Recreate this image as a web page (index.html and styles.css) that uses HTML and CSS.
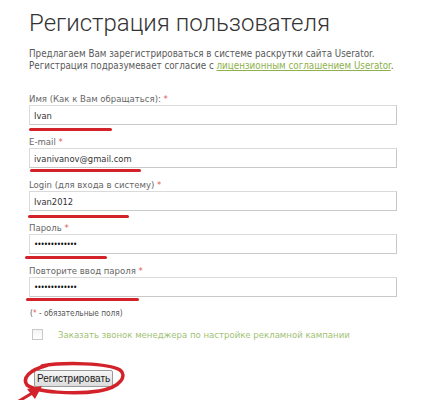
FILE: index.html
```html
<!DOCTYPE html>
<html lang="ru">
<head>
<meta charset="utf-8">
<title>Регистрация пользователя</title>
<link rel="stylesheet" href="styles.css">
</head>
<body>
<div class="page">
  <h1 class="title">Регистрация пользователя</h1>
  <p class="intro">Предлагаем Вам зарегистрироваться в системе раскрутки сайта Userator.<br>Регистрация подразумевает согласие с <a href="#" class="link">лицензионным соглашением Userator</a>.</p>

  <form class="form">
    <div class="field">
      <label class="label">Имя (Как к Вам обращаться): <span class="req">*</span></label>
      <input class="input" type="text" value="Ivan">
      <span class="mark mark-1"></span>
    </div>
    <div class="field">
      <label class="label">E-mail <span class="req">*</span></label>
      <input class="input" type="text" value="ivanivanov@gmail.com">
      <span class="mark mark-2"></span>
    </div>
    <div class="field">
      <label class="label">Login (для входа в систему) <span class="req">*</span></label>
      <input class="input" type="text" value="Ivan2012">
      <span class="mark mark-3"></span>
    </div>
    <div class="field">
      <label class="label">Пароль <span class="req">*</span></label>
      <input class="input pass" type="password" value="ivanivanov123">
      <span class="mark mark-4"></span>
    </div>
    <div class="field">
      <label class="label">Повторите ввод пароля <span class="req">*</span></label>
      <input class="input pass" type="password" value="ivanivanov123">
      <span class="mark mark-5"></span>
    </div>

    <p class="note">(<span class="req">*</span> - обязательные поля)</p>

    <div class="check-row">
      <span class="checkbox"></span>
      <span class="check-text">Заказать звонок менеджера по настройке рекламной кампании</span>
    </div>

    <div class="submit-row">
      <button type="button" class="btn">Регистрировать</button>
      <svg class="circle" width="104" height="36" viewBox="0 0 104 36">
        <path d="M20 5 C 42 1, 86 2, 98 9 C 105 14, 100 26, 77 30 C 52 34, 14 31, 5 24 C 0 17, 7 9, 26 4" fill="none" stroke="#d3222a" stroke-width="3.5" stroke-linecap="round"/>
      </svg>
      <svg class="arrow" width="44" height="30" viewBox="0 0 44 30">
        <line x1="2" y1="28" x2="32" y2="10" stroke="#d3222a" stroke-width="3" stroke-linecap="round"/>
        <polygon points="40,4 25,7 33,17" fill="#d3222a"/>
      </svg>
    </div>
  </form>
</div>
</body>
</html>
```

FILE: styles.css
```css
html, body {
  margin: 0;
  padding: 0;
  background: #ffffff;
}

.page {
  padding: 8px 0 0 29px;
  width: 395px;
  font-family: "DejaVu Sans Condensed", "DejaVu Sans", sans-serif;
  color: #555555;
}

.title {
  margin: 0;
  font-family: Roboto, "Liberation Sans", Arial, sans-serif;
  font-weight: 300;
  font-size: 24px;
  line-height: 30px;
  color: #333333;
}

.intro {
  margin: 10px 0 0 0;
  font-size: 9.75px;
  line-height: 12px;
  color: #5a5a5a;
}

.link {
  color: #8db14b;
  text-decoration: underline;
}

.form {
  margin-top: 20px;
}

.field {
  position: relative;
  display: flex;
  flex-direction: column;
  margin-bottom: 10px;
}

.label {
  font-size: 9.5px;
  line-height: 13px;
  color: #666666;
}

.req {
  color: #e05a5a;
}

.input {
  box-sizing: border-box;
  width: 368px;
  height: 20px;
  margin: 0;
  padding: 0 4px;
  border: 1px solid #c9c9c9;
  border-top-color: #dadada;
  border-left-color: #dadada;
  background: #ffffff;
  font-family: "DejaVu Sans Condensed", "DejaVu Sans", sans-serif;
  font-size: 9.3px;
  color: #333333;
  outline: none;
}

.pass {
  font-size: 8px;
  letter-spacing: -1px;
  color: #111111;
}

.mark {
  position: absolute;
  height: 3px;
  border-radius: 2px;
  background: #d3222a;
}

.mark-1 { left: 0; width: 83px; top: 36px; }
.mark-2 { left: 1px; width: 111px; top: 34px; }
.mark-3 { left: -1px; width: 101px; top: 37px; }
.mark-4 { left: -4px; width: 82px; top: 35px; }
.mark-5 { left: -3px; width: 113px; top: 34px; }

.note {
  margin: 2px 0 0 1px;
  font-size: 8.2px;
  line-height: 12px;
  color: #555555;
}

.check-row {
  display: flex;
  align-items: center;
  gap: 15px;
  margin: 10px 0 0 3px;
}

.checkbox {
  box-sizing: border-box;
  width: 11px;
  height: 11px;
  border: 1px solid #c8c8c8;
  background: linear-gradient(#f4f4f4, #ffffff);
}

.check-text {
  font-size: 9.5px;
  color: #9fc274;
}

.submit-row {
  position: relative;
  margin: 30px 0 0 5px;
  height: 30px;
}

.btn {
  display: block;
  height: 17px;
  padding: 0 2px;
  border: 1px solid #9a9a9a;
  border-radius: 2px;
  background: linear-gradient(#f6f6f6, #dcdcdc);
  font-family: "Liberation Sans", Arial, sans-serif;
  font-size: 10px;
  color: #1a1a1a;
  line-height: 15px;
}

.circle {
  position: absolute;
  left: -12px;
  top: -9px;
}

.arrow {
  position: absolute;
  left: -32px;
  top: 12px;
}
```
